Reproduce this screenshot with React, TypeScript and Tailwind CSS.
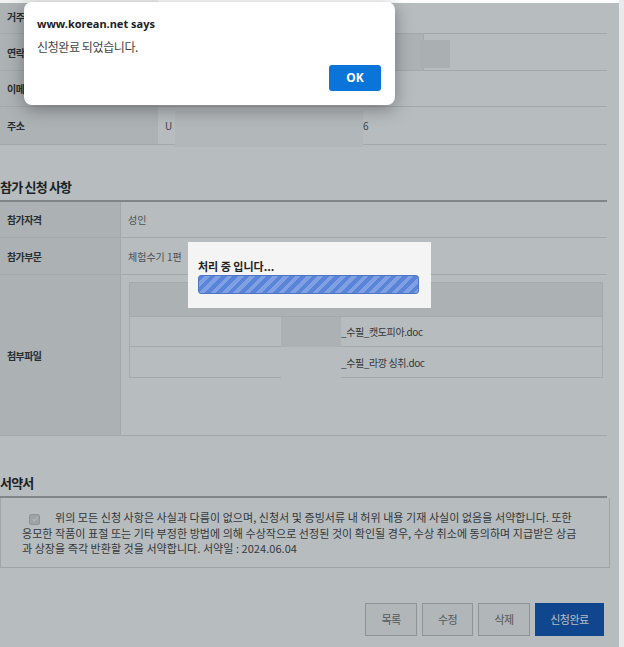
import type { ReactNode } from "react";

const kr = "font-['Noto_Sans_CJK_KR','Noto_Sans',sans-serif]";

function TopRow({ label, h, children }: { label: string; h: string; children?: ReactNode }) {
    return (
        <div className={`flex border-b border-[#e2e2e2] ${h}`}>
            <div className="flex w-[158px] shrink-0 items-center bg-[#f1f1f1] px-[7px] text-[10px] font-bold tracking-[-0.4px] text-[#333]">
                {label}
            </div>
            <div className="relative flex flex-1 items-center px-[7px] text-[10px] text-[#555]">{children}</div>
        </div>
    );
}

function ApplyRow({ label, h, children }: { label: string; h: string; children?: ReactNode }) {
    return (
        <div className={`flex border-b border-[#e2e2e2] ${h}`}>
            <div className="flex w-[121px] shrink-0 items-center border-r border-[#e2e2e2] bg-[#f0f0f0] px-[7px] text-[10px] font-bold tracking-[-0.6px] text-[#333]">
                {label}
            </div>
            <div className="flex-1">{children}</div>
        </div>
    );
}

function Heading({ title, h }: { title: string; h: string }) {
    return (
        <>
            <div className={`flex items-end pb-[3px] ${h}`}>
                <h2 className="text-[13px] leading-[20px] font-bold tracking-[-0.8px] text-[#222]">{title}</h2>
            </div>
            <div className="h-[2px] bg-[#b0b0b0]" />
        </>
    );
}

const files = ["_수필_캣도피아.doc", "_수필_라깡 싱취.doc"];

export default function App() {
    return (
        <div className={`relative h-[647px] w-[624px] overflow-hidden bg-[#e9e9e9] ${kr}`}>
            {/* page underneath */}
            <div className="h-full w-[619px] bg-white">
                <div className="w-[607px]">
                    {/* applicant info */}
                    <TopRow label="거주국가" h="h-[34px]" />
                    <TopRow label="연락처" h="h-[37px]">
                        <div className="-ml-[7px] h-full w-[266px] border-r border-[#e2e2e2] bg-[#f1f1f1]" />
                        <div className="absolute left-[262px] top-[6px] h-[28px] w-[30px] bg-[#ececec]" />
                    </TopRow>
                    <TopRow label="이메일" h="h-[36px]" />
                    <TopRow label="주소" h="h-[38px]">
                        <span>U</span>
                        <div className="absolute left-[17px] top-[4px] h-[36px] w-[188px] bg-[#f8f8f8]" />
                        <span className="absolute left-[205px]">6</span>
                    </TopRow>

                    {/* application details */}
                    <Heading title="참가 신청 사항" h="h-[55px]" />
                    <ApplyRow label="참가자격" h="h-[36px]">
                        <div className="flex h-full items-center pl-[7px] text-[10px] text-[#666]">성인</div>
                    </ApplyRow>
                    <ApplyRow label="참가부문" h="h-[37px]">
                        <div className="flex h-full items-center pl-[7px] text-[10px] text-[#666]">체험수기 1편</div>
                    </ApplyRow>
                    <ApplyRow label="첨부파일" h="h-[161px]">
                        <div className="pl-[8px] pt-[7px]">
                            <div className="relative w-[474px] border-x border-t border-[#e4e4e4]">
                                <div className="h-[34px] border-b border-[#e4e4e4] bg-[#f0f0f0]" />
                                {files.map((f, i) => (
                                    <div key={f} className={`flex items-center border-b border-[#e4e4e4] ${i === 0 ? "h-[30px]" : "h-[31px]"}`}>
                                        <div className="w-[211px] shrink-0" />
                                        <span className="text-[10px] tracking-[-0.4px] text-[#444]">{f}</span>
                                    </div>
                                ))}
                                <div className="absolute left-[151px] top-[34px] w-[60px]">
                                    <div className="h-[30px] bg-[#efefef]" />
                                    <div className="h-[33px] bg-white" />
                                </div>
                            </div>
                        </div>
                    </ApplyRow>

                    {/* pledge */}
                    <Heading title="서약서" h="h-[60px]" />
                    <div className="w-[610px] border-x border-b border-[#dedede] pb-[10px] pl-[21px] pt-[12px] text-[11px] leading-[15.5px] tracking-[0.05px] text-[#444]">
                        <span className="mr-[15px] ml-[7px] inline-flex h-[11px] w-[11px] items-center justify-center rounded-[2px] border border-[#c6c6c6] bg-[#dcdcdc] align-[-1px]">
                            <svg viewBox="0 0 10 10" className="h-[8px] w-[8px]">
                                <path d="M2 5.2 4.2 7.3 8 2.8" fill="none" stroke="#f4f4f4" strokeWidth="1.6" />
                            </svg>
                        </span>
                        위의 모든 신청 사항은 사실과 다름이 없으며, 신청서 및 증빙서류 내 허위 내용 기재 사실이 없음을 서약합니다. 또한
                        <br />
                        응모한 작품이 표절 또는 기타 부정한 방법에 의해 수상작으로 선정된 것이 확인될 경우, 수상 취소에 동의하며 지급받은 상금
                        <br />
                        과 상장을 즉각 반환할 것을 서약합니다. 서약일 : 2024.06.04
                    </div>

                    {/* actions */}
                    <div className="mt-[35px] flex justify-end gap-[5px] pr-[3px] text-[11px] tracking-[-0.5px]">
                        <button type="button" className="h-[33px] w-[52px] border border-[#c4c4c4] bg-[#f6f6f6] text-[#707070]">목록</button>
                        <button type="button" className="h-[33px] w-[51px] border border-[#c4c4c4] bg-[#f6f6f6] text-[#707070]">수정</button>
                        <button type="button" className="h-[33px] w-[52px] border border-[#c4c4c4] bg-[#f6f6f6] text-[#707070]">삭제</button>
                        <button type="button" className="h-[33px] w-[69px] bg-[#0f57b8] text-white">신청완료</button>
                    </div>
                </div>
            </div>

            {/* dim overlay */}
            <div className="absolute bottom-0 left-0 top-[3px] w-[619px] bg-[rgba(18,32,42,0.3)]" />

            {/* processing box */}
            <div className="absolute left-[188px] top-[242px] h-[66px] w-[243px] bg-[#f4f4f4] pl-[10px] pt-[16px]">
                <p className="text-[11px] leading-[16px] font-bold text-[#222]">처리 중 입니다...</p>
                <div className="mt-[1px] h-[19px] w-[221px] rounded-[3px] border border-[#4e74c4] bg-[repeating-linear-gradient(135deg,#5a84d7_0px,#5a84d7_4px,#7fa1e4_4px,#7fa1e4_8px)]" />
            </div>

            {/* browser alert */}
            <div className="absolute left-[24px] top-[2px] h-[103px] w-[371px] rounded-[8px] bg-white pl-[13px] pr-[14px] pt-[13px] shadow-[0_4px_18px_rgba(0,0,0,0.35)] font-['Noto_Sans','Noto_Sans_CJK_KR',sans-serif]">
                <p className="text-[11px] leading-[18px] font-bold text-[#202124]">www.korean.net says</p>
                <p className={`mt-[5px] text-[12px] leading-[18px] tracking-[-0.4px] text-[#444] ${kr}`}>신청완료 되었습니다.</p>
                <div className="mt-[9px] flex justify-end">
                    <button type="button" className="h-[26px] w-[52px] rounded-[3px] bg-[#0b74d8] text-[12px] font-bold text-white">OK</button>
                </div>
            </div>
        </div>
    );
}
